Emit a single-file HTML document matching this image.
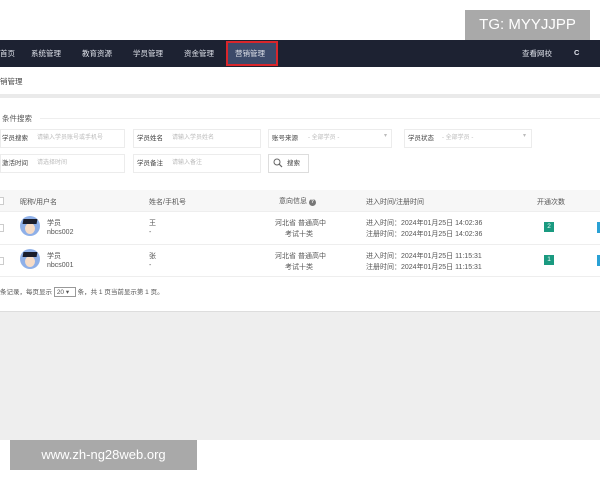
<!DOCTYPE html>
<html><head><meta charset="utf-8"><style>
*{margin:0;padding:0;box-sizing:border-box}
body{width:600px;height:480px;position:relative;overflow:hidden;background:#fff;font-family:"Liberation Sans","Noto Sans CJK SC",sans-serif;font-size:7px;color:#555}
.a{position:absolute;white-space:nowrap}
.nav{position:absolute;left:0;top:40px;width:600px;height:27px;background:#1d2232}
.nav span{position:absolute;top:8px;color:#dfe2ea;font-size:7.5px}
.inp{position:absolute;height:19px;border:1px solid #ececec;background:#fff}
.lbl{position:absolute;font-size:6.5px;color:#444}
.ph{position:absolute;font-size:6px;color:#bbb}
.av{position:absolute;width:20px;height:20px;border-radius:50%;background:#8fb0e8;overflow:hidden}
.av:before{content:"";position:absolute;left:5px;top:7px;width:10px;height:11px;border-radius:50%;background:#f7dcc6}
.av:after{content:"";position:absolute;left:3px;top:3px;width:14px;height:5px;background:#1a1d2b;transform:skewX(-10deg)}
.badge{position:absolute;width:10px;height:10px;background:#1a9a80;color:#fff;font-size:6.5px;text-align:center;line-height:10px}
.cb{position:absolute;left:-4px;width:8px;height:8px;border:1px solid #ccc;background:#fff}
</style></head><body>
<div class="a" style="left:465px;top:10px;width:125px;height:30px;background:#a9a9a9;color:#fff;font-size:15px;line-height:30px;text-align:center">TG: MYYJJPP</div>
<div class="nav">
<span style="left:0">首页</span><span style="left:31px">系统管理</span><span style="left:82px">教育资源</span><span style="left:133px">学员管理</span><span style="left:184px">资金管理</span>
<div class="a" style="left:226px;top:1px;width:52px;height:25px;border:2px solid #d9262b;background:#3c4a6a"></div>
<span style="left:235px">营销管理</span>
<span style="left:522px">查看网校</span><span style="left:574px;font-weight:bold">C</span>
</div>
<div class="a" style="left:0;top:76px;font-size:7.5px;color:#444">销管理</div>
<div class="a" style="left:0;top:94px;width:600px;height:4px;background:#eaeaea"></div>
<div class="a" style="left:2px;top:113px;font-size:7.5px;color:#555">条件搜索</div>
<div class="a" style="left:40px;top:118px;width:560px;height:1px;background:#eee"></div>
<div class="inp" style="left:0;top:129px;width:125px"></div><div class="lbl" style="left:2px;top:132px">学员搜索</div><div class="ph" style="left:37px;top:132px">请输入学员账号或手机号</div>
<div class="inp" style="left:133px;top:129px;width:128px"></div><div class="lbl" style="left:137px;top:132px">学员姓名</div><div class="ph" style="left:172px;top:132px">请输入学员姓名</div>
<div class="inp" style="left:268px;top:129px;width:124px"></div><div class="lbl" style="left:272px;top:132px">账号来源</div><div class="ph" style="left:308px;top:132px">- 全部学员 -</div><div class="ph" style="left:384px;top:132px">▾</div>
<div class="inp" style="left:404px;top:129px;width:128px"></div><div class="lbl" style="left:408px;top:132px">学员状态</div><div class="ph" style="left:442px;top:132px">- 全部学员 -</div><div class="ph" style="left:523px;top:132px">▾</div>
<div class="inp" style="left:0;top:154px;width:125px"></div><div class="lbl" style="left:2px;top:157px">激活时间</div><div class="ph" style="left:37px;top:157px">请选择时间</div>
<div class="inp" style="left:133px;top:154px;width:128px"></div><div class="lbl" style="left:137px;top:157px">学员备注</div><div class="ph" style="left:172px;top:157px">请输入备注</div>
<div class="inp" style="left:268px;top:154px;width:41px;border-color:#ddd"></div>
<svg class="a" style="left:273px;top:158px" width="10" height="10" viewBox="0 0 10 10"><circle cx="4" cy="4" r="3" fill="none" stroke="#666" stroke-width="1"/><path d="M6.2 6.2L9 9" stroke="#666" stroke-width="1.2"/></svg>
<div class="lbl" style="left:287px;top:157px">搜索</div>
<div class="a" style="left:0;top:190px;width:600px;height:21px;background:#f7f7f7"></div>
<div class="a" style="left:0;top:211px;width:600px;height:1px;background:#eee"></div>
<div class="a" style="left:0;top:244px;width:600px;height:1px;background:#eee"></div>
<div class="a" style="left:0;top:276px;width:600px;height:1px;background:#eee"></div>
<div class="cb" style="top:197px"></div><div class="cb" style="top:224px"></div><div class="cb" style="top:257px"></div>
<div class="a" style="left:20px;top:197px">昵称/用户名</div><div class="a" style="left:149px;top:197px">姓名/手机号</div>
<div class="a" style="left:279px;top:196px">意向信息 <b style="display:inline-block;width:7px;height:7px;border-radius:50%;background:#777;color:#fff;font-size:5px;text-align:center;line-height:7px">?</b></div>
<div class="a" style="left:366px;top:197px">进入时间/注册时间</div><div class="a" style="left:537px;top:197px">开通次数</div>
<div class="av" style="left:20px;top:216px"></div><div class="av" style="left:20px;top:249px"></div>
<div class="a" style="left:47px;top:218px">学员</div><div class="a" style="left:47px;top:229px">nbcs002</div>
<div class="a" style="left:47px;top:251px">学员</div><div class="a" style="left:47px;top:262px">nbcs001</div>
<div class="a" style="left:149px;top:218px">王</div><div class="a" style="left:149px;top:229px">-</div>
<div class="a" style="left:149px;top:251px">张</div><div class="a" style="left:149px;top:262px">-</div>
<div class="a" style="left:275px;top:218px">河北省 普通高中</div><div class="a" style="left:285px;top:229px">考试十类</div>
<div class="a" style="left:275px;top:251px">河北省 普通高中</div><div class="a" style="left:285px;top:262px">考试十类</div>
<div class="a" style="left:366px;top:218px">进入时间：2024年01月25日 14:02:36</div><div class="a" style="left:366px;top:229px">注册时间：2024年01月25日 14:02:36</div>
<div class="a" style="left:366px;top:251px">进入时间：2024年01月25日 11:15:31</div><div class="a" style="left:366px;top:262px">注册时间：2024年01月25日 11:15:31</div>
<div class="badge" style="left:544px;top:222px">2</div><div class="badge" style="left:544px;top:255px">1</div>
<div class="a" style="left:597px;top:222px;width:3px;height:11px;background:#2aa1d5"></div><div class="a" style="left:597px;top:255px;width:3px;height:11px;background:#2aa1d5"></div>
<div class="a" style="left:0;top:286px;font-size:6.5px">条记录，每页显示 <span style="display:inline-block;border:1px solid #999;padding:0 2px;width:22px">20 ▾</span> 条，共 1 页当前显示第 1 页。</div>
<div class="a" style="left:0;top:311px;width:600px;height:129px;background:#eeeeee;border-top:1px solid #ddd"></div>
<div class="a" style="left:10px;top:440px;width:187px;height:30px;background:#a9a9a9;color:#fff;font-size:13px;line-height:30px;text-align:center">www.zh-ng28web.org</div>
</body></html>
